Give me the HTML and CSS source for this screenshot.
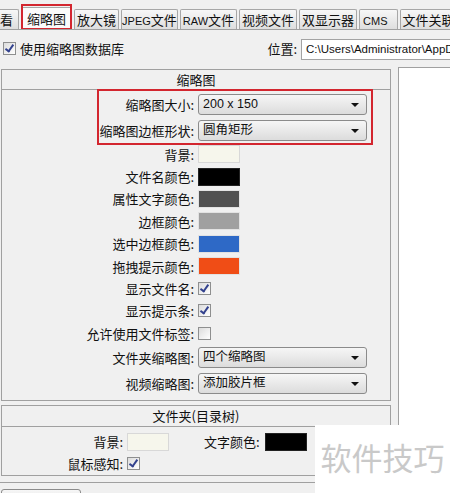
FILE: index.html
```
<!DOCTYPE html>
<html>
<head>
	<meta charset="utf-8">
	<title>缩略图设置</title>
	<link rel="stylesheet" href="styles.css">
</head>
<body>
	<div class="tabs">
		<div class="tab tab-cut">查看</div>
		<div class="tab tab-on">缩略图</div>
		<div class="tab">放大镜</div>
		<div class="tab tab-tight"><span class="lat">JPEG</span>文件</div>
		<div class="tab"><span class="lat">RAW</span>文件</div>
		<div class="tab">视频文件</div>
		<div class="tab">双显示器</div>
		<div class="tab tab-cms"><span class="lat">CMS</span></div>
		<div class="tab">文件关联</div>
		<div class="mark mark-tab"></div>
	</div>

	<div class="topbar">
		<span class="check on"></span>
		<span class="top-label">使用缩略图数据库</span>
		<span class="loc-label">位置:</span>
		<div class="input">C:\Users\Administrator\AppData</div>
	</div>

	<div class="main">
		<div class="left">
			<section class="panel panel-thumb">
				<div class="panel-head">缩略图</div>
				<div class="panel-body">
					<div class="row row-sel">
						<span class="label">缩略图大小:</span>
						<div class="select">200 x 150<i class="arrow"></i></div>
					</div>
					<div class="row row-sel">
						<span class="label">缩略图边框形状:</span>
						<div class="select">圆角矩形<i class="arrow"></i></div>
					</div>
					<div class="row">
						<span class="label">背景:</span>
						<span class="swatch sw-bg"></span>
					</div>
					<div class="row">
						<span class="label">文件名颜色:</span>
						<span class="swatch sw-black"></span>
					</div>
					<div class="row">
						<span class="label">属性文字颜色:</span>
						<span class="swatch sw-dark"></span>
					</div>
					<div class="row">
						<span class="label">边框颜色:</span>
						<span class="swatch sw-grey"></span>
					</div>
					<div class="row">
						<span class="label">选中边框颜色:</span>
						<span class="swatch sw-blue"></span>
					</div>
					<div class="row">
						<span class="label">拖拽提示颜色:</span>
						<span class="swatch sw-orange"></span>
					</div>
					<div class="row">
						<span class="label">显示文件名:</span>
						<span class="check on"></span>
					</div>
					<div class="row">
						<span class="label">显示提示条:</span>
						<span class="check on"></span>
					</div>
					<div class="row">
						<span class="label">允许使用文件标签:</span>
						<span class="check"></span>
					</div>
					<div class="row row-sel">
						<span class="label">文件夹缩略图:</span>
						<div class="select">四个缩略图<i class="arrow"></i></div>
					</div>
					<div class="row row-sel">
						<span class="label">视频缩略图:</span>
						<div class="select">添加胶片框<i class="arrow"></i></div>
					</div>
					<div class="mark mark-sel"></div>
				</div>
			</section>

			<section class="panel panel-tree">
				<div class="panel-head">文件夹(目录树)</div>
				<div class="panel-body">
					<div class="row2">
						<span class="label">背景:</span>
						<span class="swatch sw-bg"></span>
						<span class="label-inline">文字颜色:</span>
						<span class="swatch sw-black"></span>
					</div>
					<div class="row2">
						<span class="label">鼠标感知:</span>
						<span class="check on"></span>
					</div>
				</div>
			</section>
		</div>
		<div class="preview"></div>
	</div>

	<div class="footer">
		<div class="btn"></div>
	</div>

	<div class="watermark">软件技巧</div>
</body>
</html>
```

FILE: styles.css
```
body {
	margin: 0;
	width: 450px;
	height: 493px;
	overflow: hidden;
	position: relative;
	background-color: #f0f0f0;
	font-family: "Noto Sans CJK SC", "Liberation Sans", sans-serif;
	font-size: 13px;
	color: #111;
}

/* tab strip */
.tabs {
	position: relative;
	display: flex;
	align-items: flex-end;
	gap: 2px;
	height: 29px;
	border-bottom: 1px solid #a0a0a0;
	white-space: nowrap;
	overflow: hidden;
}

.tab {
	flex: none;
	height: 19px;
	line-height: 19px;
	padding: 0 2px;
	border: 1px solid #a7a7a7;
	border-bottom: none;
	border-radius: 2px 2px 0 0;
	background: linear-gradient(#f7f7f7, #dedede);
}

.lat {
	font-family: "Liberation Sans", sans-serif;
	font-size: 11px;
}

.tab-cut {
	margin-left: -16px;
	padding-right: 5px;
}

.tab-on {
	height: 22px;
	line-height: 22px;
	padding: 0 5px;
	margin-bottom: -1px;
	background: #fbfbfb;
}

.tab-tight {
	padding: 0;
}

.tab-cms {
	padding: 0 9px 0 3px;
}

.mark {
	position: absolute;
	border: 2px solid #d3262f;
}

.mark-tab {
	left: 21px;
	top: 4px;
	width: 47px;
	height: 22px;
}

/* checkbox + location line */
.topbar {
	display: flex;
	align-items: center;
	height: 36px;
	padding-left: 3px;
}

.top-label {
	margin-left: 4px;
}

.loc-label {
	margin-left: auto;
	margin-right: 4px;
}

.input {
	width: 144px;
	height: 19px;
	line-height: 19px;
	padding-left: 4px;
	margin-top: 2px;
	border: 1px solid #a3a3a3;
	border-right: none;
	background: #fff;
	overflow: hidden;
	white-space: nowrap;
	font-family: "Liberation Sans", sans-serif;
	font-size: 11.5px;
}

.check {
	display: inline-block;
	width: 11px;
	height: 11px;
	border: 1px solid #8e8f8f;
	background: linear-gradient(135deg, #dcdcdc, #fff);
	position: relative;
}

.check.on::after {
	content: "";
	position: absolute;
	left: 3px;
	top: 0px;
	width: 3px;
	height: 7px;
	border-right: 2px solid #33428e;
	border-bottom: 2px solid #33428e;
	transform: rotate(35deg);
}

/* main area */
.main {
	display: flex;
	align-items: flex-start;
}

.left {
	width: 390px;
	margin-left: 1px;
}

.panel {
	border: 1px solid #a0a0a0;
}

.panel-thumb {
	margin-top: 3px;
}

.panel-tree {
	margin-top: 4px;
}

.panel-head {
	height: 19px;
	line-height: 19px;
	text-align: center;
	border-bottom: 1px solid #a0a0a0;
}

.panel-thumb .panel-body {
	position: relative;
	padding: 1px 0 3px;
}

.row {
	display: grid;
	grid-template-columns: 192px 1fr;
	column-gap: 4px;
	align-items: center;
	height: 22.4px;
}

.row-sel {
	height: 26px;
}

.label {
	text-align: right;
	white-space: nowrap;
}

.select {
	position: relative;
	width: 163px;
	height: 19px;
	line-height: 19px;
	padding-left: 4px;
	border: 1px solid #8b8b8b;
	border-radius: 3px;
	background: linear-gradient(#f6f6f6, #dcdcdc);
	font-family: "Liberation Sans", "Noto Sans CJK SC", sans-serif;
	font-size: 12.5px;
}

.arrow {
	position: absolute;
	right: 7px;
	top: 8px;
	border-left: 4px solid transparent;
	border-right: 4px solid transparent;
	border-top: 4px solid #111;
}

.mark-sel {
	left: 95px;
	top: -1px;
	width: 272px;
	height: 52px;
}

.swatch {
	display: inline-block;
	width: 40px;
	height: 16px;
	border: 1px solid #e2e2e2;
}

.sw-bg { background-color: #f6f6ec; border-color: #d8d8d8; }
.sw-black { background-color: #000; border-color: #222; }
.sw-dark { background-color: #505050; }
.sw-grey { background-color: #a0a0a0; }
.sw-blue { background-color: #2e69c6; }
.sw-orange { background-color: #f04d16; }

.panel-tree .panel-head {
	height: 20px;
	line-height: 20px;
}

.panel-tree .panel-body {
	padding-top: 4px;
}

.row2 {
	display: flex;
	align-items: center;
	height: 22px;
}

.row2 .label {
	width: 121px;
	margin-right: 4px;
}

.label-inline {
	margin-left: 35px;
	margin-right: 5px;
}

.preview {
	flex: 1;
	height: 357px;
	margin-left: 7px;
	margin-top: 1px;
	border-left: 1px solid #a0a0a0;
	border-top: 1px solid #a0a0a0;
	background: #fff;
}

.footer {
	margin-top: 6px;
	border-top: 1px solid #a0a0a0;
	padding-top: 6px;
}

.btn {
	width: 78px;
	height: 20px;
	border: 1px solid #8b8b8b;
	border-radius: 3px;
	margin-left: 1px;
	background: linear-gradient(#f6f6f6, #dcdcdc);
}

.watermark {
	position: absolute;
	left: 315px;
	top: 425px;
	width: 135px;
	height: 68px;
	background: #fff;
	color: #c9c9c9;
	font-size: 31px;
	line-height: 64px;
	text-align: center;
	white-space: nowrap;
}
```
